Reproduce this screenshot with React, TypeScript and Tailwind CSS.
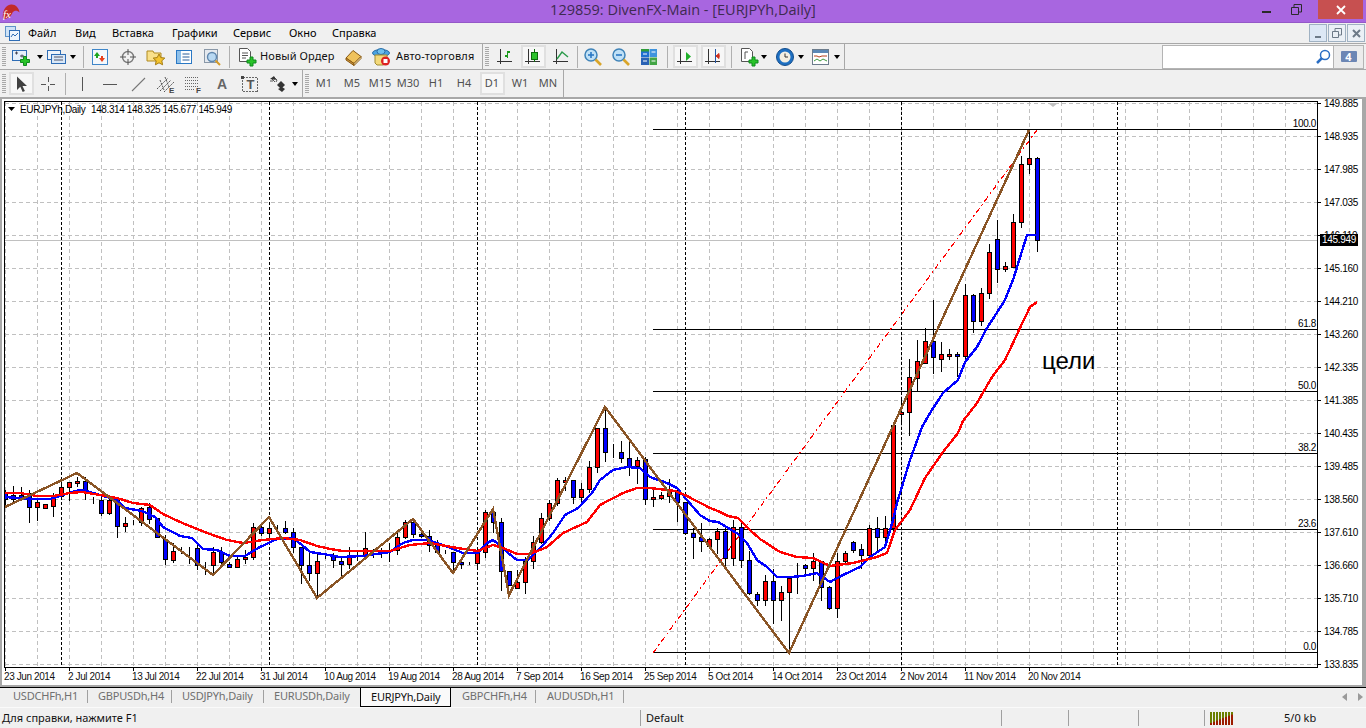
import React from "react";

type C = [number, number, number, number, "r" | "b" | "d"];
const candles: C[] = [
[492,499,490,505,"b"],[495,499,486,503,"r"],[495,497,487,498,"b"],[493,507,490,522,"b"],[502,507,498,520,"r"],[504,508,504,508,"r"],[495,506,493,516,"r"],[487,496,485,497,"r"],[482,487,482,500,"r"],[481,483,477,486,"r"],
[481,492,477,499,"b"],[501,501,497,503,"d"],[500,513,495,515,"b"],[500,513,497,514,"r"],[500,526,500,537,"b"],[523,526,517,531,"r"],[523,523,520,524,"d"],[508,522,507,525,"r"],[507,519,503,523,"b"],[518,537,518,537,"b"],
[539,559,535,564,"b"],[551,560,543,562,"r"],[548,548,547,553,"d"],[548,548,547,563,"d"],[548,565,542,569,"b"],[564,564,562,574,"d"],[552,565,547,573,"r"],[552,562,547,565,"b"],[564,567,562,567,"b"],[559,567,557,567,"r"],
[557,559,550,563,"r"],[527,557,523,559,"r"],[527,533,525,535,"b"],[528,533,523,537,"r"],[528,528,525,530,"d"],[528,532,521,533,"b"],[532,547,528,552,"b"],[547,565,547,583,"b"],[565,573,553,580,"b"],[561,573,553,598,"r"],
[555,555,553,558,"d"],[556,560,553,567,"b"],[561,564,557,575,"b"],[557,564,547,568,"r"],[556,556,552,560,"d"],[548,555,532,553,"r"],[550,550,549,557,"d"],[550,550,548,557,"d"],[550,550,543,561,"d"],[537,550,532,554,"r"],
[522,537,520,538,"r"],[522,534,518,537,"b"],[534,536,532,537,"b"],[536,545,530,551,"b"],[543,552,540,553,"b"],[552,552,550,553,"d"],[552,562,552,573,"b"],[562,564,560,568,"b"],[563,563,562,564,"d"],[553,563,552,566,"r"],
[512,552,510,557,"r"],[512,522,508,532,"b"],[522,571,518,590,"b"],[571,585,571,585,"b"],[582,588,570,588,"r"],[561,582,557,593,"r"],[542,561,536,568,"r"],[518,542,513,543,"r"],[503,518,500,520,"r"],[480,503,478,505,"r"],
[480,482,477,490,"r"],[480,497,480,503,"b"],[489,497,483,503,"r"],[467,489,461,492,"r"],[428,467,428,472,"r"],[428,452,410,461,"b"],[452,452,444,457,"d"],[452,458,441,462,"b"],[458,467,441,475,"b"],[460,466,457,483,"r"],
[459,499,457,504,"b"],[497,499,490,506,"r"],[495,498,492,499,"r"],[490,496,479,502,"r"],[492,502,487,521,"b"],[502,533,502,533,"b"],[533,537,528,558,"b"],[537,541,523,551,"b"],[539,546,538,547,"r"],[531,539,528,553,"r"],
[531,558,528,566,"b"],[527,558,520,565,"r"],[527,560,522,567,"b"],[560,593,551,594,"b"],[594,600,592,605,"b"],[581,600,575,605,"r"],[581,600,569,623,"b"],[592,600,586,620,"r"],[578,592,578,653,"r"],[578,578,563,593,"d"],
[565,568,564,573,"b"],[561,568,553,580,"r"],[561,587,561,600,"b"],[587,608,586,609,"b"],[561,608,553,617,"r"],[553,561,551,564,"r"],[542,550,541,552,"b"],[549,555,544,568,"b"],[528,555,525,557,"r"],[528,537,517,550,"b"],
[528,537,516,547,"r"],[425,528,422,530,"r"],[412,414,400,423,"r"],[377,412,359,435,"r"],[361,378,340,390,"r"],[341,363,328,363,"r"],[341,357,300,373,"b"],[354,359,342,371,"r"],[354,356,349,359,"r"],[354,356,352,376,"b"],
[295,356,284,360,"r"],[295,321,294,332,"b"],[293,321,288,325,"r"],[252,293,244,298,"r"],[239,269,220,282,"b"],[266,269,262,271,"r"],[222,267,214,267,"r"],[164,222,156,227,"r"],[158,164,130,173,"r"],[158,240,157,251,"b"],
];

const blue = "5,497 33,499 50,499 63,495 75,491 83,490 93,493 107,497 117,500 125,508 142,511 155,517 163,527 180,536 192,538 203,549 217,550 230,556 245,556 258,548 277,539 293,538 302,545 310,552 323,554 340,557 363,556 390,552 403,543 413,540 428,540 443,545 463,553 478,553 487,543 493,540 500,545 508,553 517,560 528,560 543,545 553,533 565,515 578,508 592,493 600,480 613,470 627,467 640,468 650,477 667,483 677,488 687,500 700,515 710,521 718,522 730,529 738,534 747,543 757,560 767,567 777,577 790,577 803,576 817,573 830,582 843,575 860,567 870,557 885,547 893,520 897,503 910,460 922,427 930,413 943,393 958,380 965,362 977,347 987,328 1005,300 1013,280 1027,235 1037,235";
const red = "5,493 20,493 37,496 53,496 70,493 82,492 100,495 117,498 133,503 150,505 163,514 180,522 207,533 227,540 243,543 263,540 283,538 300,540 317,546 330,549 343,551 390,551 410,545 430,543 457,548 478,551 493,545 503,548 517,554 530,554 547,547 563,533 587,522 600,505 623,493 637,488 650,488 675,491 687,496 710,508 718,511 728,516 738,518 750,530 760,539 780,552 797,557 813,558 830,566 853,563 877,557 887,553 895,530 910,510 925,478 943,452 958,433 963,421 977,403 992,377 1005,360 1020,328 1030,307 1037,302";
const zig = "5,507 77,473 213,575 269,517 317,598 413,519 453,573 493,509 509,595 605,407 789,653 1029,130";
const fibo: [number, string][] = [[129,"100.0"],[329,"61.8"],[391,"50.0"],[453,"38.2"],[529,"23.6"],[652,"0.0"]];
const prices = ["149.885","148.935","147.985","147.035","146.110","145.160","144.210","143.260","142.335","141.385","140.435","139.485","138.560","137.610","136.660","135.710","134.785","133.835"];
const dates = ["23 Jun 2014","2 Jul 2014","13 Jul 2014","22 Jul 2014","31 Jul 2014","10 Aug 2014","19 Aug 2014","28 Aug 2014","7 Sep 2014","16 Sep 2014","25 Sep 2014","5 Oct 2014","14 Oct 2014","23 Oct 2014","2 Nov 2014","11 Nov 2014","20 Nov 2014"];
const seps = [61,269,477,685,901,1117];
const NUM = "'Liberation Sans',sans-serif";

function Chart() {
  return (
    <svg width={1314} height={567} viewBox="4 101 1314 567" className="block">
      <rect x={4} y={101} width={1314} height={567} fill="#fff" />
      <g shapeRendering="crispEdges" stroke="#c0c0c0" strokeDasharray="4 3">
        {prices.map((_, i) => <line key={i} x1={5} x2={1317} y1={103.5 + 33 * i} y2={103.5 + 33 * i} />)}
        {Array.from({ length: 41 }, (_, i) => <line key={i} x1={5.5 + 32 * i} x2={5.5 + 32 * i} y1={102} y2={667} />)}
      </g>
      <g shapeRendering="crispEdges" stroke="#000" strokeDasharray="3 2">
        {seps.map((x) => <line key={x} x1={x + 0.5} x2={x + 0.5} y1={102} y2={667} />)}
      </g>
      <line x1={5} x2={1317} y1={240.5} y2={240.5} stroke="#c0c0c0" shapeRendering="crispEdges" />
      <polygon points="1048,103 1058,103 1053,107" fill="#c0c0c0" />
      <g shapeRendering="crispEdges" stroke="#000">
        {fibo.map(([y]) => <line key={y} x1={653} x2={1317} y1={y + 0.5} y2={y + 0.5} />)}
      </g>
      <line x1={653} y1={653} x2={1037} y2={130} stroke="#f00" strokeWidth={1.2} strokeDasharray="6 3 2 3" shapeRendering="crispEdges" />
      <g shapeRendering="crispEdges">
        {candles.map(([t, b, h, l, c], i) => {
          const x = 5 + 8 * i;
          return (
            <g key={i}>
              <line x1={x + 0.5} x2={x + 0.5} y1={h} y2={l + 1} stroke="#000" />
              <rect x={x - 1.5} y={t + 0.5} width={4} height={Math.max(b - t, 0)} fill={c === "r" ? "#f00" : "#00f"} stroke="#000" />
            </g>
          );
        })}
      </g>
      <g fill="none" strokeWidth={2.4} shapeRendering="crispEdges">
        <polyline points={blue} stroke="#0000ff" />
        <polyline points={red} stroke="#ff0000" />
        <polyline points={zig} stroke="#8a5526" />
      </g>
      <rect x={4.5} y={101.5} width={1313} height={566} fill="none" stroke="#000" shapeRendering="crispEdges" />
      <polygon points="8,107 15,107 11.5,111" fill="#000" />
      <g fontSize={10} fill="#000" fontFamily={NUM} letterSpacing={-0.36}>
        <text x={20} y={113}>EURJPYh,Daily</text>
        <text x={91} y={113} letterSpacing={-0.39}>148.314 148.325 145.677 145.949</text>
        {fibo.map(([y, t]) => (
          <text key={y} x={1316} y={y - 2} textAnchor="end">{t}</text>
        ))}
      </g>
      <text x={1042} y={369} fontSize={24} fill="#000" fontFamily={NUM}>цели</text>
    </svg>
  );
}

const Caret = () => <span className="w-0 h-0 border-x-[3.5px] border-x-transparent border-t-[4px] border-t-black" />;
const Grip = () => (
  <svg width={4} height={20} viewBox="0 0 4 20">
    {Array.from({ length: 10 }, (_, i) => <rect key={i} x={0} y={i * 2} width={4} height={1} fill="#a8a8a8" />)}
  </svg>
);
const Sep = () => <span className="w-px h-[22px] bg-[#b0b0b0]" />;

const S = ({ children }: { children: React.ReactNode }) => (
  <svg width={20} height={20} viewBox="0 0 20 20" className="shrink-0">{children}</svg>
);
const Plus = ({ x = 0, y = 0 }: { x?: number; y?: number }) => (
  <path transform={`translate(${x} ${y})`} d="M3.5.5h3v3h3v3h-3v3h-3v-3h-3v-3h3z" fill="#29c329" stroke="#0f8a1e" />
);
const Axis = () => <path d="M5.5 2v15M2 14.5h15" stroke="#333" fill="none" shapeRendering="crispEdges" />;

const INewChart = () => (
  <S><rect x={1.5} y={3.5} width={14} height={10} fill="#e6f0fb" stroke="#2f6db5" /><path d="M4 6h3M5.5 4.5v3M9 9h4M11 7.5v3" stroke="#445" /><Plus x={9} y={9} /></S>
);
const IProfile = () => (
  <S><rect x={0.5} y={3.5} width={13} height={9} fill="#eef4fb" stroke="#2f6db5" /><rect x={4.5} y={7.5} width={14} height={9} fill="#d9e8f8" stroke="#2f6db5" /><path d="M7 10h9M7 13h9" stroke="#556" /></S>
);
const IMarket = () => (
  <S><rect x={2.5} y={2.5} width={15} height={15} fill="#f4f8fc" stroke="#3f86c9" /><path d="M7 5l3 4H8v2H6V9H4z" fill="#1da51d" /><path d="M12 15l-3-4h2V9h2v2h2z" fill="#e8401c" /></S>
);
const ICross = () => (
  <S><circle cx={10} cy={10} r={5.5} fill="none" stroke="#7a7a7a" strokeWidth={1.4} /><path d="M10 2v6M10 12v6M2 10h6M12 10h6" stroke="#555" /></S>
);
const IStar = () => (
  <S><path d="M1 4h6l1 2h7v8H1z" fill="#f9e08a" stroke="#b08a20" /><path d="M13 7l1.8 3.6 4 .5-3 2.7.8 4-3.6-2-3.6 2 .8-4-3-2.7 4-.5z" fill="#f4c430" stroke="#a57c10" /></S>
);
const IWindow = () => (
  <S><rect x={2.5} y={3.5} width={15} height={13} fill="#fff" stroke="#2a78c4" /><rect x={3} y={4} width={4} height={12} fill="#8ec0ea" /><path d="M8.5 7h7M8.5 10h7M8.5 13h7" stroke="#2a5f9a" /></S>
);
const IMag = () => (
  <S><rect x={2.5} y={2.5} width={13} height={13} fill="#e5e9ee" stroke="#8a98a8" /><circle cx={10} cy={10} r={4.5} fill="#b8d8f2" stroke="#5f86ad" strokeWidth={1.4} /><path d="M13.5 13.5l4.5 4.5" stroke="#d49a28" strokeWidth={2} /></S>
);
const INewOrder = () => (
  <S><path d="M2.5 1.5h8l3 3v10h-11z" fill="#fff" stroke="#555" /><path d="M5 6h6M5 8.5h6M5 11h4" stroke="#555" /><Plus x={9.5} y={9.5} /></S>
);
const IBook = () => (
  <S><path d="M2 11l7-7.5 8 6-7 7z" fill="#efc25c" stroke="#8a5a12" /><path d="M2 11l8 5.5v2L2 13z" fill="#c9923a" stroke="#8a5a12" /><path d="M10 16.5l7-7v2l-7 7z" fill="#fff2c4" stroke="#8a5a12" /></S>
);
const IAuto = () => (
  <S><ellipse cx={9} cy={6} rx={8.5} ry={3.5} fill="#4aa3e0" stroke="#2a6ca6" /><ellipse cx={9} cy={4.5} rx={4} ry={3} fill="#6ec0ee" stroke="#2a6ca6" /><path d="M3 8h12v8l-4 2H5l-2-2z" fill="#f3d97a" stroke="#a08a30" /><circle cx={13.5} cy={14} r={4.5} fill="#d22" /><rect x={11.5} y={12} width={4} height={4} fill="#fff" /></S>
);
const IBars = () => (
  <S><Axis /><path d="M12.5 4v7M10 9h2.5M12.5 5h2.5" stroke="#1a9a1a" fill="none" shapeRendering="crispEdges" strokeWidth={1.4} /></S>
);
const ICandle = () => (
  <S><Axis /><path d="M11.5 2v13" stroke="#0a6a0a" shapeRendering="crispEdges" /><rect x={8.5} y={5.5} width={6} height={7} fill="#2ac22a" stroke="#0a6a0a" shapeRendering="crispEdges" /></S>
);
const ILine = () => (
  <S><Axis /><path d="M6 12l5-7 6 5" fill="none" stroke="#2a9a4a" strokeWidth={1.4} /></S>
);
const IZoom = ({ plus }: { plus?: boolean }) => (
  <S><circle cx={8} cy={8} r={6} fill="#bfe0f6" stroke="#3f83b8" strokeWidth={1.5} /><path d="M5 8h6" stroke="#2a78c4" strokeWidth={1.6} />{plus && <path d="M8 5v6" stroke="#2a78c4" strokeWidth={1.6} />}<path d="M12.5 12.5l5.5 5.5" stroke="#d9a52a" strokeWidth={2.6} /></S>
);
const ITile = () => (
  <S><rect x={2} y={2} width={8} height={8} fill="#1f6fd0" /><rect x={10.5} y={2} width={7.5} height={8} fill="#3e93dd" /><rect x={2} y={10.5} width={8} height={7.5} fill="#2b63b5" /><rect x={10.5} y={10.5} width={7.5} height={7.5} fill="#42a545" /><rect x={2} y={2} width={8} height={2.5} fill="#2f9c3a" /><path d="M4 7h4M12.5 5h4M4 14h4M12.5 14h4" stroke="#fff" /></S>
);
const IShift = () => (
  <S><Axis /><path d="M11 5l5 4.5-5 4.5z" fill="#1fb02a" /></S>
);
const IAutoscroll = () => (
  <S><Axis /><path d="M12.5 2v14" stroke="#2456a6" shapeRendering="crispEdges" /><path d="M17 9h-4M13 9l3-2.5v5z" fill="#d2301c" stroke="#d2301c" /></S>
);
const ITemplate = () => (
  <S><path d="M2.5 1.5h8l3 3v10h-11z" fill="#fff" stroke="#555" /><path d="M6 5h3M6 5v7" stroke="#555" /><Plus x={9.5} y={9.5} /></S>
);
const IClock = () => (
  <S><circle cx={10} cy={10} r={8.5} fill="#1d6fc2" stroke="#134d8c" /><circle cx={10} cy={10} r={5.5} fill="#f3efe2" /><path d="M10 6.5V10h3" stroke="#333" fill="none" /></S>
);
const IInd = () => (
  <S><rect x={1.5} y={2.5} width={16} height={15} fill="#fff" stroke="#6c7c8c" /><rect x={2} y={3} width={15} height={3} fill="#5b88b6" /><path d="M3 9h3l2 1 3-1h5" stroke="#b5401c" fill="none" /><path d="M3 14l3-2 3 2 3-2 4 2" stroke="#3e9a3e" fill="none" /></S>
);
const ICursor = () => (
  <S><path d="M6 2.5v13.5l3.3-3.2 2.4 5.2 2.2-1-2.4-5.1h4.5z" fill="#404040" /></S>
);
const ICrossThin = () => (
  <S><path d="M10 3v5M10 12v5M3 10h5M12 10h5" stroke="#555" shapeRendering="crispEdges" /></S>
);
const IV = () => <S><path d="M10.5 3v14" stroke="#555" shapeRendering="crispEdges" /></S>;
const IH = () => <S><path d="M3 10.5h14" stroke="#555" shapeRendering="crispEdges" /></S>;
const IT = () => <S><path d="M4 17L17 4" stroke="#777" strokeWidth={1.1} /></S>;
const IChan = () => (
  <S><path d="M1 15L12 4M4 17L15 6M8 18L18 8" stroke="#555" strokeDasharray="2 1" /><path d="M4 6l4 10M9 3l4 10" stroke="#555" strokeDasharray="2 1" /><text x={13} y={19} fontSize={8} fill="#444" fontFamily={NUM} fontWeight={700}>E</text></S>
);
const IFib = () => (
  <S><path d="M1 3h14M1 6h14M1 9h14M1 12h14M1 15h10" stroke="#666" strokeDasharray="1 1" shapeRendering="crispEdges" /><text x={12} y={19} fontSize={8} fill="#444" fontFamily={NUM} fontWeight={700}>F</text></S>
);
const IAText = () => (
  <S><text x={10} y={15} textAnchor="middle" fontSize={14} fontWeight={700} fill="#666" fontFamily={NUM}>A</text></S>
);
const ITBox = () => (
  <S><rect x={2.5} y={3.5} width={15} height={14} fill="none" stroke="#666" strokeDasharray="2 1" shapeRendering="crispEdges" /><rect x={1} y={2} width={3} height={3} fill="#444" /><text x={10.5} y={15} textAnchor="middle" fontSize={13} fontWeight={700} fill="#555" fontFamily={NUM}>T</text></S>
);
const IArrows = () => (
  <S><path d="M3 4l4 4M6 3l3 3-1 2M2 7l3 0" stroke="#555" fill="none" /><path d="M9 11l4-4 4 4-4 4z" fill="#333" /><path d="M2 5l4-3 2 4z" fill="#333" /><path d="M10 15l4 3 3-3-3-2z" fill="#333" /></S>
);
const ISearch = () => (
  <svg width={16} height={16} viewBox="0 0 16 16"><circle cx={10} cy={6} r={4.5} fill="#fff" stroke="#2a6ec4" strokeWidth={1.5} /><path d="M7 9l-5 5" stroke="#2a6ec4" strokeWidth={2.5} /></svg>
);

const Cell = ({ className = "w-[28px]", children, on }: { className?: string; children?: React.ReactNode; on?: boolean }) => (
  <div className={`${className} h-full shrink-0 flex items-center justify-center`}>
    {on ? <div className="w-[25px] h-[23px] flex items-center justify-center bg-[#f7f7f7] border-2 border-[#e0e0e0]">{children}</div> : children}
  </div>
);

const TF = ({ t, on }: { t: string; on?: boolean }) => (
  <Cell on={on}><span className="text-[11px] text-[#505050]">{t}</span></Cell>
);

function Row1() {
  return (
    <div className="h-[26px] flex items-center border-b border-[#a8a8a8] bg-[#f0f0f0]">
      <div className="h-full flex items-center">
        <Cell className="w-[10px] pr-[3px]"><Grip /></Cell>
        <Cell className="w-[33px] justify-start"><div className="flex items-center gap-[6px] pl-[1px]"><INewChart /><Caret /></div></Cell>
        <Cell className="w-[37px]"><div className="flex items-center gap-[3px]"><IProfile /><Caret /></div></Cell>
        <Cell className="w-[6px]"><Sep /></Cell>
        <Cell><IMarket /></Cell>
        <Cell><ICross /></Cell>
        <Cell><IStar /></Cell>
        <Cell><IWindow /></Cell>
        <Cell><IMag /></Cell>
        <Cell className="w-[6px]"><Sep /></Cell>
        <Cell className="w-[108px]"><div className="flex items-center w-full pl-[5px] gap-[3px]"><INewOrder /><span className="text-[11px] tracking-[0.1px] text-[#111]">Новый Ордер</span></div></Cell>
        <Cell><IBook /></Cell>
        <Cell className="w-[110px]"><div className="flex items-center w-full pl-[4px] gap-[4px]"><IAuto /><span className="text-[11px] tracking-[0.15px] text-[#111]">Авто-торговля</span></div></Cell>
        <div className="w-[5px] h-full border-r border-[#a8a8a8]" />
        <Cell className="w-[8px]"><Grip /></Cell>
        <Cell><IBars /></Cell>
        <Cell on><ICandle /></Cell>
        <Cell><ILine /></Cell>
        <Cell className="w-[4px]"><Sep /></Cell>
        <Cell><IZoom plus /></Cell>
        <Cell><IZoom /></Cell>
        <Cell><ITile /></Cell>
        <Cell className="w-[8px]"><Sep /></Cell>
        <Cell on><IShift /></Cell>
        <Cell on><IAutoscroll /></Cell>
        <Cell className="w-[8px]"><Sep /></Cell>
        <Cell className="w-[36px]"><div className="flex items-center gap-[2px]"><ITemplate /><Caret /></div></Cell>
        <Cell className="w-[36px]"><div className="flex items-center gap-[3px]"><IClock /><Caret /></div></Cell>
        <Cell className="w-[38px] border-r border-[#a8a8a8]"><div className="flex items-center gap-[3px]"><IInd /><Caret /></div></Cell>
      </div>
      <div className="ml-auto mr-[2px] flex h-[24px] w-[202px] border border-[#b4b4b4] bg-white">
        <div className="flex-1 flex items-center justify-end pr-[2px]"><ISearch /></div>
        <div className="w-[30px] bg-[#ececec] border-l border-[#b4b4b4] flex items-center justify-center">
          <div className="relative w-[16px] h-[11px] bg-[#6c86b4] rounded-[1px] flex items-center justify-center text-[11px] leading-none font-bold text-white">4</div>
        </div>
      </div>
    </div>
  );
}

function Row2() {
  return (
    <div className="h-[27px] flex items-center bg-[#f0f0f0]">
      <Cell className="w-[8px]"><Grip /></Cell>
      <Cell className="w-[26px]" on><ICursor /></Cell>
      <Cell><ICrossThin /></Cell>
      <Cell className="w-[6px]"><Sep /></Cell>
      <Cell><IV /></Cell>
      <Cell><IH /></Cell>
      <Cell><IT /></Cell>
      <Cell><IChan /></Cell>
      <Cell><IFib /></Cell>
      <Cell><IAText /></Cell>
      <Cell><ITBox /></Cell>
      <Cell className="w-[39px] border-r border-[#a8a8a8]"><div className="flex items-center gap-[4px]"><IArrows /><Caret /></div></Cell>
      <Cell className="w-[7px]"><Grip /></Cell>
      <TF t="M1" /><TF t="M5" /><TF t="M15" /><TF t="M30" /><TF t="H1" /><TF t="H4" /><TF t="D1" on /><TF t="W1" /><TF t="MN" />
      <div className="h-full w-px ml-px bg-[#a8a8a8]" />
    </div>
  );
}

const tabs: [string, string, boolean?][] = [
  ["USDCHFh,H1","w-[88px] pl-[13px] border-r"],
  ["GBPUSDh,H4","w-[84px] pl-[10px] border-r"],
  ["USDJPYh,Daily","w-[92px] pl-[10px] border-r"],
  ["EURUSDh,Daily","w-[96px] pl-[10px]"],
  ["EURJPYh,Daily","w-[91px] pl-[10px]",true],
  ["GBPCHFh,H4","w-[85px] pl-[11px] border-r"],
  ["AUDUSDh,H1","w-[88px] pl-[11px] border-r"],
];

export default function App() {
  return (
    <div className="w-[1366px] h-[728px] overflow-hidden flex flex-col bg-[#f0f0f0] text-black font-['Noto_Sans',sans-serif]">
      <div className="h-[23px] shrink-0 relative flex items-center justify-center bg-[#a866e0] border-b border-[#9458c8]">
        <svg width={18} height={16} viewBox="0 0 18 16" className="absolute left-[2px] top-[4px]">
          <path d="M1 15C0 8 3 1 9 .5c4-.5 8 3 8.500 8-2-2-5-2.500-7 0-1 3-4 6.500-9.500 6.500z" fill="#c22a2a" />
          <text x={1} y={14} fontSize={11} fontStyle="italic" fill="#fff" fontFamily="'Liberation Serif',serif">fx</text>
        </svg>
        <span className="text-[14.5px] leading-none text-[#3e2a50] -mt-[1px] font-['Open_Sans',sans-serif]">129859: DivenFX-Main - [EURJPYh,Daily]</span>
        <div className="absolute right-[3px] top-0 flex items-start">
          <div className="w-[35px] h-[19px] flex items-end justify-center pb-[6px]"><span className="w-[9px] h-[2px] bg-[#2a2a2a]" /></div>
          <div className="w-[25px] h-[19px] flex items-center justify-center mr-[9px]">
            <svg width={11} height={11} viewBox="0 0 11 11"><path d="M.5 3.500h7v7h-7zM3 3V.5h7.500V8H8" fill="none" stroke="#2a2a2a" strokeWidth={1} /></svg>
          </div>
          <div className="w-[45px] h-[19px] bg-[#c75050] flex items-center justify-center">
            <svg width={10} height={10} viewBox="0 0 10 10"><path d="M1 1l8 8M9 1l-8 8" stroke="#fff" strokeWidth={1.8} /></svg>
          </div>
        </div>
      </div>

      <div className="h-[21px] shrink-0 flex items-center border-b border-[#a8a8a8] text-[11px]">
        <svg width={15} height={15} viewBox="0 0 15 15" className="ml-[5px] mr-[8px] shrink-0">
          <rect x={0.5} y={0.5} width={10} height={10} fill="#cfe3f6" stroke="#5f93c8" />
          <rect x={4.5} y={4.5} width={10} height={10} fill="#eef5fc" stroke="#2f6db5" />
          <path d="M6 11l2-3 2 2 3-3" stroke="#2f6db5" fill="none" />
        </svg>
        <span className="w-[47px]">Файл</span>
        <span className="w-[37px]">Вид</span>
        <span className="w-[60px]">Вставка</span>
        <span className="w-[61px]">Графики</span>
        <span className="w-[56px]">Сервис</span>
        <span className="w-[43px]">Окно</span>
        <span>Справка</span>
        <div className="ml-auto mr-[1px] flex gap-[1px]">
          <div className="w-[18px] h-[18px] border border-[#9fb1c2] bg-[#dde8f5] flex items-end justify-center pb-[3px]"><span className="w-[6px] h-[2px] bg-[#6d7a88]" /></div>
          <div className="w-[18px] h-[18px] border border-[#9fb1c2] bg-[#ebf0f6] flex items-center justify-center">
            <svg width={10} height={10} viewBox="0 0 10 10"><path d="M.5 3.500h6v6h-6zM3 3V.5h6.500V7H7" fill="none" stroke="#6d7a88" /></svg>
          </div>
          <div className="w-[18px] h-[18px] border border-[#9fb1c2] bg-[#ebf0f6] flex items-center justify-center">
            <svg width={9} height={9} viewBox="0 0 9 9"><path d="M1 1l7 7M8 1L1 8" stroke="#6d7a88" strokeWidth={2} /></svg>
          </div>
        </div>
      </div>

      <Row1 />
      <Row2 />

      <div className="h-[590px] shrink-0 flex flex-col border-t-2 border-l-2 border-r-4 border-b-2 border-[#a8a8a8] bg-white font-['Liberation_Sans',sans-serif]">
        <div className="pl-[2px] pt-[2px] flex h-[569px]">
          <Chart />
          <div className="relative w-[44px] h-[567px]">
            <div className="-mt-[14px] flex flex-col">
              {prices.map((p) => (
                <div key={p} className="h-[33px] flex items-center gap-[3px]">
                  <span className="w-[3px] h-px bg-black" />
                  <span className="text-[10px] tracking-[-0.3px] leading-none text-black">{p}</span>
                </div>
              ))}
            </div>
            <div className="absolute left-[2px] top-[133px] w-[38px] h-[12px] bg-black text-white text-[10px] tracking-[-0.3px] leading-[12px] text-center">145.949</div>
          </div>
        </div>
        <div className="h-[17px] pl-[3px] flex">
          {dates.map((d) => (
            <div key={d} className="w-[64px] relative pt-[2px]">
              <span className="absolute left-0 top-0 w-px h-[3px] bg-black" />
              <span className="text-[10px] tracking-[-0.4px] leading-[13px] whitespace-nowrap text-[#111] block -ml-px">{d}</span>
            </div>
          ))}
        </div>
      </div>

      <div className="h-[21px] shrink-0 flex border-t border-black border-b border-b-[#fafafa] text-[11px] tracking-[-0.2px] text-[#707070] bg-[#efefef]">
        {tabs.map(([t, c, a]) => (
          a ? (
            <div key={t} className={`${c} h-[19px] border-x border-b border-black bg-[#fafafa] text-[#111] flex items-center`}>{t}</div>
          ) : (
            <div key={t} className="h-[17px] flex items-center">
              <div className={`${c} h-[13px] border-[#a0a0a0] flex items-center`}>{t}</div>
            </div>
          )
        ))}
        <div className="ml-auto mr-[3px] flex items-center gap-[11px] h-[17px]">
          <span className="w-0 h-0 border-y-[4px] border-y-transparent border-r-[5px] border-r-[#9a9a9a]" />
          <span className="w-0 h-0 border-y-[4px] border-y-transparent border-l-[5px] border-l-[#9a9a9a]" />
        </div>
      </div>

      <div className="h-[20px] shrink-0 flex items-center text-[11px] text-[#111]">
        <div className="w-[640px] pl-[2px]">Для справки, нажмите F1</div>
        <div className="w-[361px] h-[16px] border-l border-[#a0a0a0] pl-[5px] flex items-center">Default</div>
        <div className="w-[67px] h-[16px] border-l border-[#a0a0a0]" />
        <div className="w-[70px] h-[16px] border-l border-[#a0a0a0]" />
        <div className="w-[66px] h-[16px] border-l border-[#a0a0a0]" />
        <div className="flex-1 h-[16px] border-l border-[#a0a0a0] flex items-center pl-[5px]">
          <svg width={24} height={13} viewBox="0 0 24 13" className="shrink-0">
            {[0,1,2,3,4,5,6,7].map((i) => (
              <g key={i}>
                <rect x={i * 3} y={0} width={2} height={13} fill="#6b7f00" />
                <rect x={i * 3} y={11 - i * 1.2} width={2} height={2 + i * 1.2} fill="#9c1c00" />
              </g>
            ))}
          </svg>
          <span className="ml-[50px]">5/0 kb</span>
        </div>
      </div>
    </div>
  );
}
